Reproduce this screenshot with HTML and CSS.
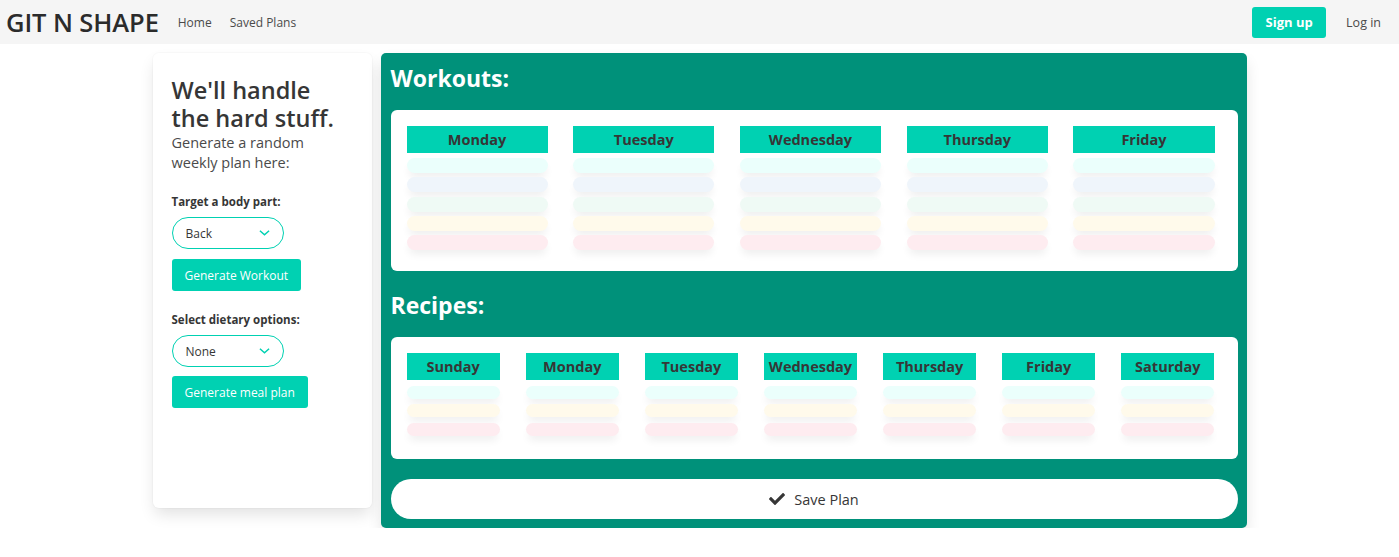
FILE: index.html
```html
<!DOCTYPE html>
<html lang="en">
<head>
<meta charset="utf-8">
<title>Git N Shape</title>
<link rel="stylesheet" href="styles.css">
</head>
<body>
<nav class="navbar">
  <div class="nav-left">
    <a class="brand">GIT N SHAPE</a>
    <a class="nav-link">Home</a>
    <a class="nav-link">Saved Plans</a>
  </div>
  <div class="nav-right">
    <a class="btn-signup">Sign up</a>
    <a class="nav-link login">Log in</a>
  </div>
</nav>

<main class="page">
  <aside class="side-card">
    <h1 class="side-title">We'll handle the hard stuff.</h1>
    <p class="side-sub">Generate a random weekly plan here:</p>

    <label class="field-label">Target a body part:</label>
    <div class="select-pill"><span>Back</span><svg class="chev" viewBox="0 0 12 8" width="11" height="8"><path d="M1 1.5 L6 6 L11 1.5" fill="none" stroke="#00d1b2" stroke-width="1.6"/></svg></div>
    <button class="btn-primary">Generate Workout</button>

    <label class="field-label second">Select dietary options:</label>
    <div class="select-pill"><span>None</span><svg class="chev" viewBox="0 0 12 8" width="11" height="8"><path d="M1 1.5 L6 6 L11 1.5" fill="none" stroke="#00d1b2" stroke-width="1.6"/></svg></div>
    <button class="btn-primary">Generate meal plan</button>
  </aside>

  <section class="plan-panel">
    <h2 class="panel-title">Workouts:</h2>
    <div class="plan-box workouts">
      <div class="day"><div class="day-head">Monday</div><div class="pill c1"></div><div class="pill c2"></div><div class="pill c3"></div><div class="pill c4"></div><div class="pill c5"></div></div>
      <div class="day"><div class="day-head">Tuesday</div><div class="pill c1"></div><div class="pill c2"></div><div class="pill c3"></div><div class="pill c4"></div><div class="pill c5"></div></div>
      <div class="day"><div class="day-head">Wednesday</div><div class="pill c1"></div><div class="pill c2"></div><div class="pill c3"></div><div class="pill c4"></div><div class="pill c5"></div></div>
      <div class="day"><div class="day-head">Thursday</div><div class="pill c1"></div><div class="pill c2"></div><div class="pill c3"></div><div class="pill c4"></div><div class="pill c5"></div></div>
      <div class="day"><div class="day-head">Friday</div><div class="pill c1"></div><div class="pill c2"></div><div class="pill c3"></div><div class="pill c4"></div><div class="pill c5"></div></div>
    </div>

    <h2 class="panel-title recipes-title">Recipes:</h2>
    <div class="plan-box recipes">
      <div class="day"><div class="day-head">Sunday</div><div class="pill c1"></div><div class="pill c4"></div><div class="pill c5"></div></div>
      <div class="day"><div class="day-head">Monday</div><div class="pill c1"></div><div class="pill c4"></div><div class="pill c5"></div></div>
      <div class="day"><div class="day-head">Tuesday</div><div class="pill c1"></div><div class="pill c4"></div><div class="pill c5"></div></div>
      <div class="day"><div class="day-head">Wednesday</div><div class="pill c1"></div><div class="pill c4"></div><div class="pill c5"></div></div>
      <div class="day"><div class="day-head">Thursday</div><div class="pill c1"></div><div class="pill c4"></div><div class="pill c5"></div></div>
      <div class="day"><div class="day-head">Friday</div><div class="pill c1"></div><div class="pill c4"></div><div class="pill c5"></div></div>
      <div class="day"><div class="day-head">Saturday</div><div class="pill c1"></div><div class="pill c4"></div><div class="pill c5"></div></div>
    </div>

    <button class="btn-save"><svg class="check" viewBox="0 0 512 512" width="16" height="16"><path d="M173.9 439.4L7.5 273c-10-10-10-26.2 0-36.2l36.2-36.2c10-10 26.2-10 36.2 0L192 312.7 432.1 72.6c10-10 26.2-10 36.2 0l36.2 36.2c10 10 10 26.2 0 36.2L210.1 439.4c-10 10-26.2 10-36.2 0z" fill="#363636"/></svg><span>Save Plan</span></button>
  </section>
</main>
</body>
</html>
```

FILE: styles.css
```css
* { box-sizing: border-box; }

body {
  margin: 0;
  background: #ffffff;
  font-family: "Open Sans", "Noto Sans", "DejaVu Sans", sans-serif;
  color: #363636;
}

.navbar {
  height: 44px;
  background: #f5f5f5;
  display: flex;
  align-items: center;
  justify-content: space-between;
}

.nav-left, .nav-right {
  display: flex;
  align-items: center;
}

.brand {
  font-size: 25.5px;
  font-weight: 600;
  color: #2b2b2b;
  padding: 0 10px 0 6px;
  letter-spacing: -0.1px;
}

.nav-link {
  font-size: 12px;
  color: #4a4a4a;
  padding: 0 9px;
}

.btn-signup {
  background: #00d1b2;
  color: #ffffff;
  font-weight: 700;
  font-size: 13px;
  height: 31px;
  width: 74px;
  display: flex;
  align-items: center;
  justify-content: center;
  border-radius: 3px;
  margin-right: 11px;
}

.login {
  margin-right: 9px;
  font-size: 12.5px;
}

.page {
  width: 1094px;
  margin: 9px auto 0;
  display: flex;
  align-items: flex-start;
  gap: 9px;
}

.side-card {
  width: 219px;
  height: 455px;
  background: #ffffff;
  border-radius: 6px;
  box-shadow: 0 8px 16px -2px rgba(10,10,10,0.12), 0 0 0 1px rgba(10,10,10,0.02);
  padding: 23px 19px;
}

.side-title {
  margin: 0;
  max-width: 172px;
  font-size: 23.5px;
  font-weight: 600;
  line-height: 28px;
  color: #363636;
}

.side-sub {
  margin: 1px 0 0;
  font-size: 14.5px;
  line-height: 20px;
  color: #4a4a4a;
}

.field-label {
  display: block;
  margin-top: 21px;
  font-size: 11.5px;
  font-weight: 700;
  line-height: 16px;
  color: #363636;
}

.field-label.second { margin-top: 21px; }

.select-pill {
  margin-top: 7px;
  width: 112px;
  height: 32px;
  border: 1px solid #00d1b2;
  border-radius: 16px;
  display: flex;
  align-items: center;
  justify-content: space-between;
  padding: 0 13px 0 13px;
  font-size: 12px;
  color: #363636;
}

.chev { display: block; }

.btn-primary {
  display: block;
  margin-top: 10px;
  height: 32px;
  padding: 0 13px;
  border: none;
  border-radius: 3px;
  background: #00d1b2;
  color: #ffffff;
  font-family: inherit;
  font-size: 12px;
}

.side-card .btn-primary:last-child { margin-top: 9px; }

.plan-panel {
  width: 866px;
  height: 475px;
  background: #00917a;
  border-radius: 5px;
  box-shadow: 0 8px 16px -2px rgba(10,10,10,0.14);
  padding: 10px 9px 9px 10px;
}

.panel-title {
  margin: 0 0 17px;
  height: 30px;
  line-height: 30px;
  color: #ffffff;
  font-size: 23px;
  font-weight: 700;
}

.recipes-title { margin-top: 19px; }

.plan-box {
  background: #ffffff;
  border-radius: 6px;
  padding: 16px 23px 0 16px;
  display: grid;
  column-gap: 25.7px;
}

.workouts {
  grid-template-columns: repeat(5, 1fr);
  height: 161px;
}

.recipes {
  grid-template-columns: repeat(7, 1fr);
  height: 122px;
}

.day-head {
  height: 27px;
  background: #00d1b2;
  color: #363636;
  font-weight: 700;
  font-size: 14.5px;
  display: flex;
  align-items: center;
  justify-content: center;
}

.pill {
  border-radius: 8px;
  box-shadow: 0 6px 8px -2px rgba(10,10,10,0.07);
}

.workouts .pill { height: 15px; margin-top: 4.3px; }
.workouts .pill.c1 { margin-top: 5px; }

.recipes .pill { height: 13px; margin-top: 5.5px; }

.c1 { background: #ebfffc; }
.c2 { background: #eff5fb; }
.c3 { background: #effaf5; }
.c4 { background: #fffaeb; }
.c5 { background: #feecf0; }

.btn-save {
  margin-top: 20px;
  width: 100%;
  height: 40px;
  border: none;
  border-radius: 20px;
  background: #ffffff;
  display: flex;
  align-items: center;
  justify-content: center;
  gap: 9px;
  font-family: inherit;
  font-size: 14.5px;
  color: #363636;
}

.check { display: block; }
```
